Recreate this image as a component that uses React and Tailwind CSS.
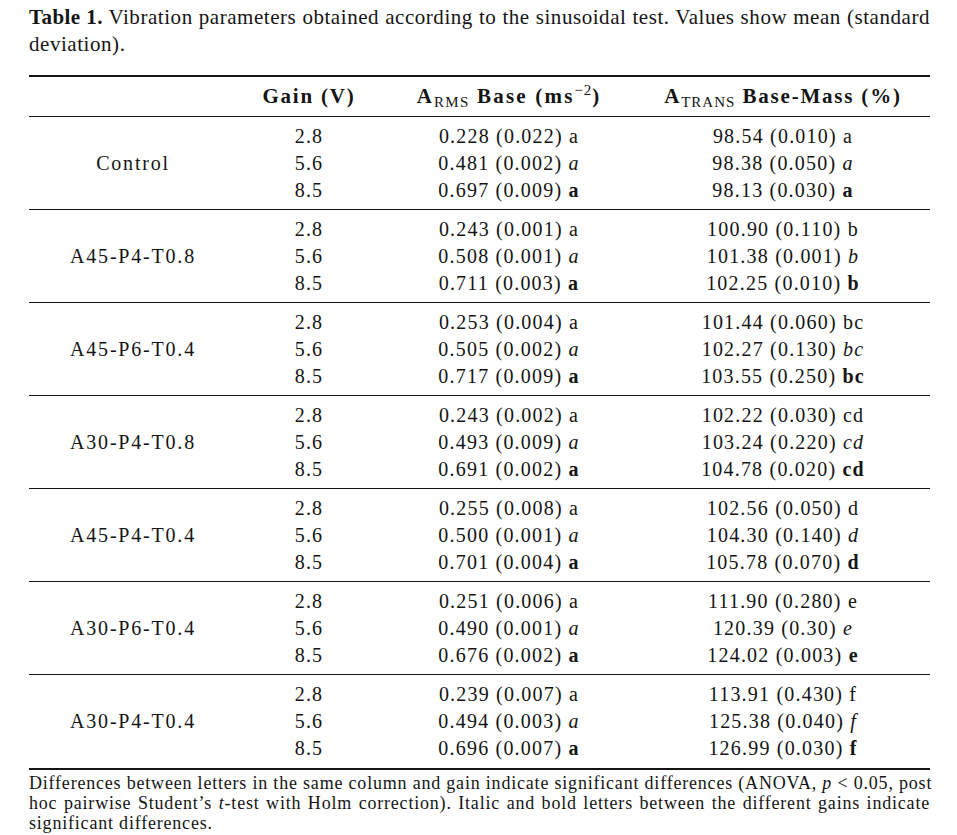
import React from "react";

const groups = [
  ["Control", "a", [["2.8", "0.228 (0.022)", "98.54 (0.010)"], ["5.6", "0.481 (0.002)", "98.38 (0.050)"], ["8.5", "0.697 (0.009)", "98.13 (0.030)"]]],
  ["A45-P4-T0.8", "b", [["2.8", "0.243 (0.001)", "100.90 (0.110)"], ["5.6", "0.508 (0.001)", "101.38 (0.001)"], ["8.5", "0.711 (0.003)", "102.25 (0.010)"]]],
  ["A45-P6-T0.4", "bc", [["2.8", "0.253 (0.004)", "101.44 (0.060)"], ["5.6", "0.505 (0.002)", "102.27 (0.130)"], ["8.5", "0.717 (0.009)", "103.55 (0.250)"]]],
  ["A30-P4-T0.8", "cd", [["2.8", "0.243 (0.002)", "102.22 (0.030)"], ["5.6", "0.493 (0.009)", "103.24 (0.220)"], ["8.5", "0.691 (0.002)", "104.78 (0.020)"]]],
  ["A45-P4-T0.4", "d", [["2.8", "0.255 (0.008)", "102.56 (0.050)"], ["5.6", "0.500 (0.001)", "104.30 (0.140)"], ["8.5", "0.701 (0.004)", "105.78 (0.070)"]]],
  ["A30-P6-T0.4", "e", [["2.8", "0.251 (0.006)", "111.90 (0.280)"], ["5.6", "0.490 (0.001)", "120.39 (0.30)"], ["8.5", "0.676 (0.002)", "124.02 (0.003)"]]],
  ["A30-P4-T0.4", "f", [["2.8", "0.239 (0.007)", "113.91 (0.430)"], ["5.6", "0.494 (0.003)", "125.38 (0.040)"], ["8.5", "0.696 (0.007)", "126.99 (0.030)"]]],
];

function Letter({ idx, children }) {
  if (idx === 1) return <span className="italic">{children}</span>;
  if (idx === 2) return <span className="font-bold">{children}</span>;
  return <span>{children}</span>;
}

export default function App() {
  return (
    <div className="w-[957px] h-[835px] bg-white text-[#141414] font-['Liberation_Serif',serif] pl-[29px] overflow-hidden">
      <div className="w-[901px]">
        <div className="pt-[4px] text-[21px] leading-[27px] tracking-[0.55px] text-justify">
          <div className="[text-align-last:justify] whitespace-nowrap">
            <span className="font-bold tracking-[0.4px]">Table 1.</span> Vibration parameters obtained according to the sinusoidal test. Values show mean (standard
          </div>
          <div>deviation).</div>
        </div>

        <div className="mt-[17px] border-t-2 border-[#141414]" />

        <div className="grid grid-cols-[208px_144px_256px_292px] h-[39px] items-center text-center text-[21px] font-bold tracking-[1.8px]">
          <div />
          <div>Gain (V)</div>
          <div className="tracking-[2.2px]">
            A<sub className="text-[15px] font-normal tracking-[1.3px]">RMS</sub> Base (ms<sup className="text-[15px] font-normal tracking-[0.8px]">−2</sup>)
          </div>
          <div>
            A<sub className="text-[15px] font-normal tracking-[1px]">TRANS</sub> Base-Mass (%)
          </div>
        </div>

        {groups.map(([label, letter, rows], gi) => (
          <div key={label} className={`border-t border-[#141414] pt-[6px] ${gi === groups.length - 1 ? "pb-[6px]" : "pb-[5px]"}`}>
            <div className="grid grid-cols-[208px_144px_256px_292px] text-center text-[20px] leading-[27px] tracking-[1.2px]">
              <div className="row-span-3 flex items-center justify-center tracking-[1.8px]">{label}</div>
              {rows.map(([g, a, t], i) => (
                <React.Fragment key={g}>
                  <div>{g}</div>
                  <div>
                    {a} <Letter idx={i}>a</Letter>
                  </div>
                  <div>
                    {t} <Letter idx={i}>{letter}</Letter>
                  </div>
                </React.Fragment>
              ))}
            </div>
          </div>
        ))}

        <div className="border-t-2 border-[#141414]" />

        <div className="pt-[3px] text-[18px] leading-[20px] tracking-[0.8px] text-justify">
          <div className="[text-align-last:justify] whitespace-nowrap">
            Differences between letters in the same column and gain indicate significant differences (ANOVA, <span className="italic">p</span> &lt; 0.05, post
          </div>
          <div className="[text-align-last:justify] whitespace-nowrap">
            hoc pairwise Student’s <span className="italic">t</span>-test with Holm correction). Italic and bold letters between the different gains indicate
          </div>
          <div>significant differences.</div>
        </div>
      </div>
    </div>
  );
}
